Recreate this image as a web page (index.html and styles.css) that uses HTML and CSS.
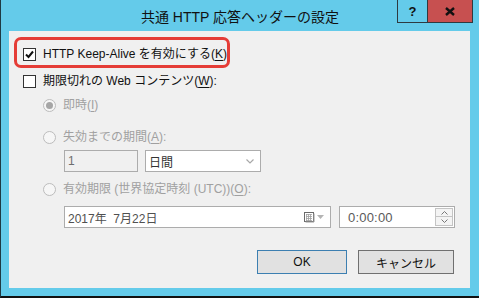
FILE: index.html
```html
<!DOCTYPE html>
<html lang="ja">
<head>
<meta charset="utf-8">
<link rel="stylesheet" href="styles.css">
</head>
<body>
<div class="window">
  <div class="titlebar">
    <div></div>
    <div class="title">共通 HTTP 応答ヘッダーの設定</div>
    <div class="controls">
      <div class="wbtn help">?</div>
      <div class="wbtn close"><svg width="10" height="9" viewBox="0 0 10 9"><path d="M1 1 L9 8 M9 1 L1 8" stroke="#111" stroke-width="2.4" fill="none"/></svg></div>
    </div>
  </div>
  <div class="client">
    <div class="highlight">
      <span class="check"><svg width="11" height="11" viewBox="0 0 11 11"><path d="M2 5.5 L4.5 8 L9 2.5" stroke="#111" stroke-width="2" fill="none"/></svg></span>
      <span class="label">HTTP Keep-Alive を有効にする(<u>K</u>)</span>
    </div>
    <div class="row row-exp">
      <span class="check"></span>
      <span class="label">期限切れの Web コンテンツ(<u>W</u>):</span>
    </div>
    <div class="row radio-row r1">
      <span class="radio on"></span>
      <span class="label dis">即時(<u>I</u>)</span>
    </div>
    <div class="row radio-row r2">
      <span class="radio"></span>
      <span class="label dis">失効までの期間(<u>A</u>):</span>
    </div>
    <div class="fields f1">
      <div class="field num">1</div>
      <div class="field combo"><span>日間</span><svg width="8" height="5" viewBox="0 0 8 5"><path d="M0.5 0.5 L4 4 L7.5 0.5" stroke="#a8a8a8" stroke-width="1.2" fill="none"/></svg></div>
    </div>
    <div class="row radio-row r3">
      <span class="radio"></span>
      <span class="label dis">有効期限 (世界協定時刻 (UTC))(<u>O</u>):</span>
    </div>
    <div class="fields f2">
      <div class="field date"><span>2017年&nbsp;&nbsp;7月22日</span>
        <span class="calicon">
          <svg width="11" height="11" viewBox="0 0 11 11"><rect x="0.5" y="0.5" width="9" height="9" fill="#fff" stroke="#6a6a6a"/><path d="M10 1.5 V10 H1.5" stroke="#9a9a9a" fill="none"/><path d="M2 2.5 H8 M2 4.5 H8 M2 6.5 H8 M2 8.5 H8 M2.5 2 V9 M4.5 2 V9 M6.5 2 V9" stroke="#a0a0a0" stroke-width="0.8"/></svg>
          <svg width="7" height="4" viewBox="0 0 7 4"><path d="M0 0 H7 L3.5 4 Z" fill="#b4b4b4"/></svg>
        </span>
      </div>
      <div class="field time"><span>0:00:00</span>
        <div class="spin">
          <div class="sbtn"><svg width="7" height="4" viewBox="0 0 7 4"><path d="M0.5 3.5 L3.5 0.5 L6.5 3.5" stroke="#777" fill="none"/></svg></div>
          <div class="sbtn"><svg width="7" height="4" viewBox="0 0 7 4"><path d="M0.5 0.5 L3.5 3.5 L6.5 0.5" stroke="#777" fill="none"/></svg></div>
        </div>
      </div>
    </div>
    <div class="buttons">
      <div class="btn default">OK</div>
      <div class="btn">キャンセル</div>
    </div>
  </div>
</div>
</body>
</html>
```

FILE: styles.css
```css
* { box-sizing: border-box; }
html, body { margin: 0; padding: 0; }
body {
  background: #111;
  width: 479px;
  height: 298px;
  overflow: hidden;
  font-family: "Liberation Sans", "Noto Sans CJK JP", sans-serif;
}
.window {
  width: 479px;
  height: 298px;
  background: #64cbea;
  border-left: 1px solid #1e3a44;
  border-bottom: 2px solid #111;
  display: flex;
  flex-direction: column;
}
.titlebar {
  height: 31px;
  display: grid;
  grid-template-columns: 1fr auto 1fr;
  align-items: start;
}
.title {
  padding-top: 7px;
  font-size: 14px;
  line-height: 20px;
  color: #111;
  white-space: nowrap;
}
.controls {
  display: flex;
  justify-content: flex-end;
  padding-right: 6px;
}
.wbtn {
  height: 23px;
  border: 1px solid #2e3a40;
  border-top: none;
  display: flex;
  align-items: center;
  justify-content: center;
}
.help {
  width: 30px;
  font-weight: bold;
  font-size: 13px;
  color: #111;
  border-right: none;
}
.close {
  width: 46px;
  background: #c75050;
}
.client {
  margin-left: 8px;
  width: 461px;
  height: 257px;
  background: #f0f0f0;
  display: flex;
  flex-direction: column;
  padding-top: 6px;
  font-size: 12px;
  color: #111;
}
.label { white-space: nowrap; line-height: 16px; }
.label u { text-underline-offset: 2px; }
.highlight {
  margin-left: 5px;
  width: 216px;
  height: 31px;
  border: 3px solid #e53d37;
  border-radius: 7px;
  display: flex;
  align-items: center;
  padding: 3px 0 0 6px;
  gap: 7px;
}
.check {
  width: 13px;
  height: 13px;
  border: 1px solid #333;
  background: #fff;
  display: flex;
  align-items: center;
  justify-content: center;
  flex: none;
}
.row {
  display: flex;
  align-items: center;
  height: 20px;
}
.row-exp {
  margin-top: 3px;
  padding-left: 14px;
  gap: 7px;
}
.radio-row {
  padding-left: 34px;
  gap: 7px;
}
.r1 { margin-top: 4px; }
.r2 { margin-top: 12px; }
.r3 { margin-top: 7px; }
.radio {
  width: 13px;
  height: 13px;
  border-radius: 50%;
  border: 1px solid #bcbcbc;
  background: #f6f6f6;
  display: flex;
  align-items: center;
  justify-content: center;
  flex: none;
}
.radio.on::after {
  content: "";
  width: 7px;
  height: 7px;
  border-radius: 50%;
  background: #a6a6a6;
}
.dis { color: #a0a0a0; }
.fields {
  display: flex;
  padding-left: 55px;
  height: 22px;
}
.f1 { margin-top: 3px; gap: 7px; }
.f2 { margin-top: 7px; gap: 8px; }
.field {
  height: 22px;
  border: 1px solid #acacac;
  background: #fff;
  display: flex;
  align-items: center;
  padding-left: 3px;
  white-space: nowrap;
}
.num {
  width: 74px;
  background: #f0f0f0;
  color: #6d6d6d;
}
.combo {
  width: 116px;
  justify-content: space-between;
  padding-right: 6px;
  color: #333;
}
.date {
  width: 267px;
  justify-content: space-between;
  padding-right: 6px;
  color: #505050;
}
.calicon {
  display: flex;
  align-items: center;
  gap: 2px;
}
.time {
  width: 116px;
  justify-content: space-between;
  padding-left: 8px;
  padding-right: 1px;
  color: #5a5a5a;
  font-size: 13px;
  letter-spacing: 0.2px;
}
.spin {
  display: flex;
  flex-direction: column;
  width: 18px;
}
.sbtn {
  height: 9px;
  border: 1px solid #c4c4c4;
  background: #f4f4f4;
  display: flex;
  align-items: center;
  justify-content: center;
}
.sbtn + .sbtn { border-top: none; height: 9px; }
.buttons {
  margin-top: 22px;
  padding-left: 248px;
  display: flex;
  gap: 11px;
}
.btn {
  height: 24px;
  width: 90px;
  border: 1px solid #707070;
  background: #e1e1e1;
  display: flex;
  align-items: center;
  justify-content: center;
  color: #111;
}
.btn.default { border-color: #3c7fb1; }
.btn + .btn { width: 96px; }
```
